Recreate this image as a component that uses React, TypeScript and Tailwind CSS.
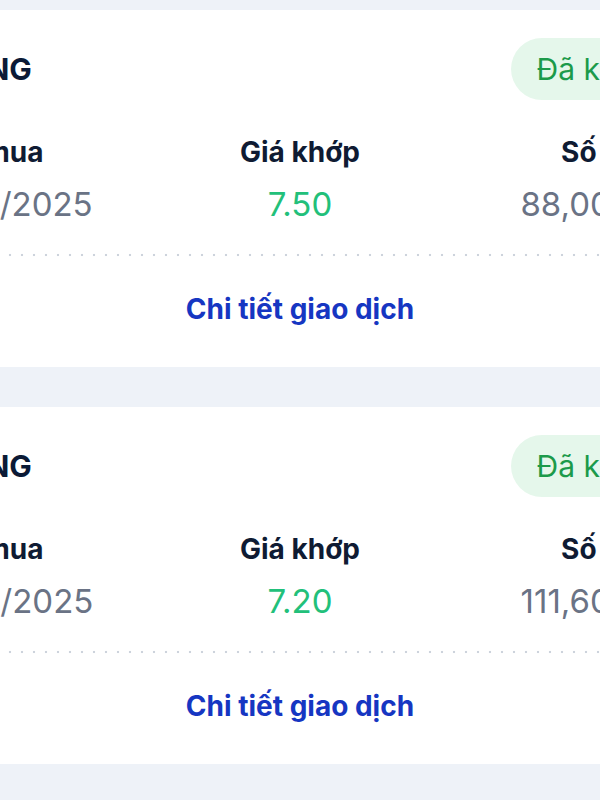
import React from "react";

// ── Data ───────────────────────────────────────────────────────────

interface Order {
  ticker: string;
  date: string;
  price: string;
  qty: string;
}

const ORDERS: Order[] = [
  { ticker: "HNG", date: "12/03/2025", price: "7.50", qty: "88,000 cp" },
  { ticker: "HNG", date: "10/03/2025", price: "7.20", qty: "111,600 cp" },
];

// ── Card ───────────────────────────────────────────────────────────

function OrderCard({ order }: { order: Order }) {
  return (
    <div className="bg-white px-[70px] pt-[28px] pb-[41px]">
      {/* header */}
      <div className="flex items-center justify-between h-[62px]">
        <div className="flex items-center gap-[4px]">
          <div className="w-[40px] h-[40px] rounded-full bg-[#e6ecf5]" />
          <span className="text-[30px] leading-[38px] font-bold text-[#0b1a36]">{order.ticker}</span>
        </div>
        <span className="rounded-full bg-[#e5f7eb] px-[26px] py-[12px] text-[30px] leading-[38px] text-[#1c9a4a]">
          Đã khớp
        </span>
      </div>

      {/* info */}
      <div className="grid grid-cols-3 mt-[35px]">
        <div className="flex flex-col items-start gap-[14px]">
          <span className="-ml-[14px] text-[28px] leading-[35px] font-bold text-[#0f1b33]">Ngày mua</span>
          <span className="-ml-[7px] text-[33px] leading-[41px] text-[#6a7385]">{order.date}</span>
        </div>
        <div className="flex flex-col items-center gap-[14px]">
          <span className="text-[28px] leading-[35px] font-bold text-[#0f1b33]">Giá khớp</span>
          <span className="text-[33px] leading-[41px] text-[#22c07a]">{order.price}</span>
        </div>
        <div className="flex flex-col items-end gap-[14px]">
          <span className="text-[28px] leading-[35px] font-bold text-[#0f1b33]">Số lượng</span>
          <span className="text-[33px] leading-[41px] text-[#6a7385]">{order.qty}</span>
        </div>
      </div>

      {/* dotted divider */}
      <div className="mt-[28px] h-[4px] bg-[radial-gradient(circle,#cdd3dc_1px,transparent_1.6px)] bg-[length:12px_4px]" />

      <div className="mt-[35px] text-center text-[28px] leading-[34px] font-bold text-[#1636c2]">
        Chi tiết giao dịch
      </div>
    </div>
  );
}

// ── Page ───────────────────────────────────────────────────────────

export default function App() {
  return (
    <div className="w-[600px] h-[800px] overflow-hidden bg-[#eef2f8] font-['Inter',sans-serif]">
      <div className="w-[900px] -ml-[150px] pt-[10px] flex flex-col gap-[40px]">
        {ORDERS.map((o, i) => (
          <OrderCard key={i} order={o} />
        ))}
      </div>
    </div>
  );
}
